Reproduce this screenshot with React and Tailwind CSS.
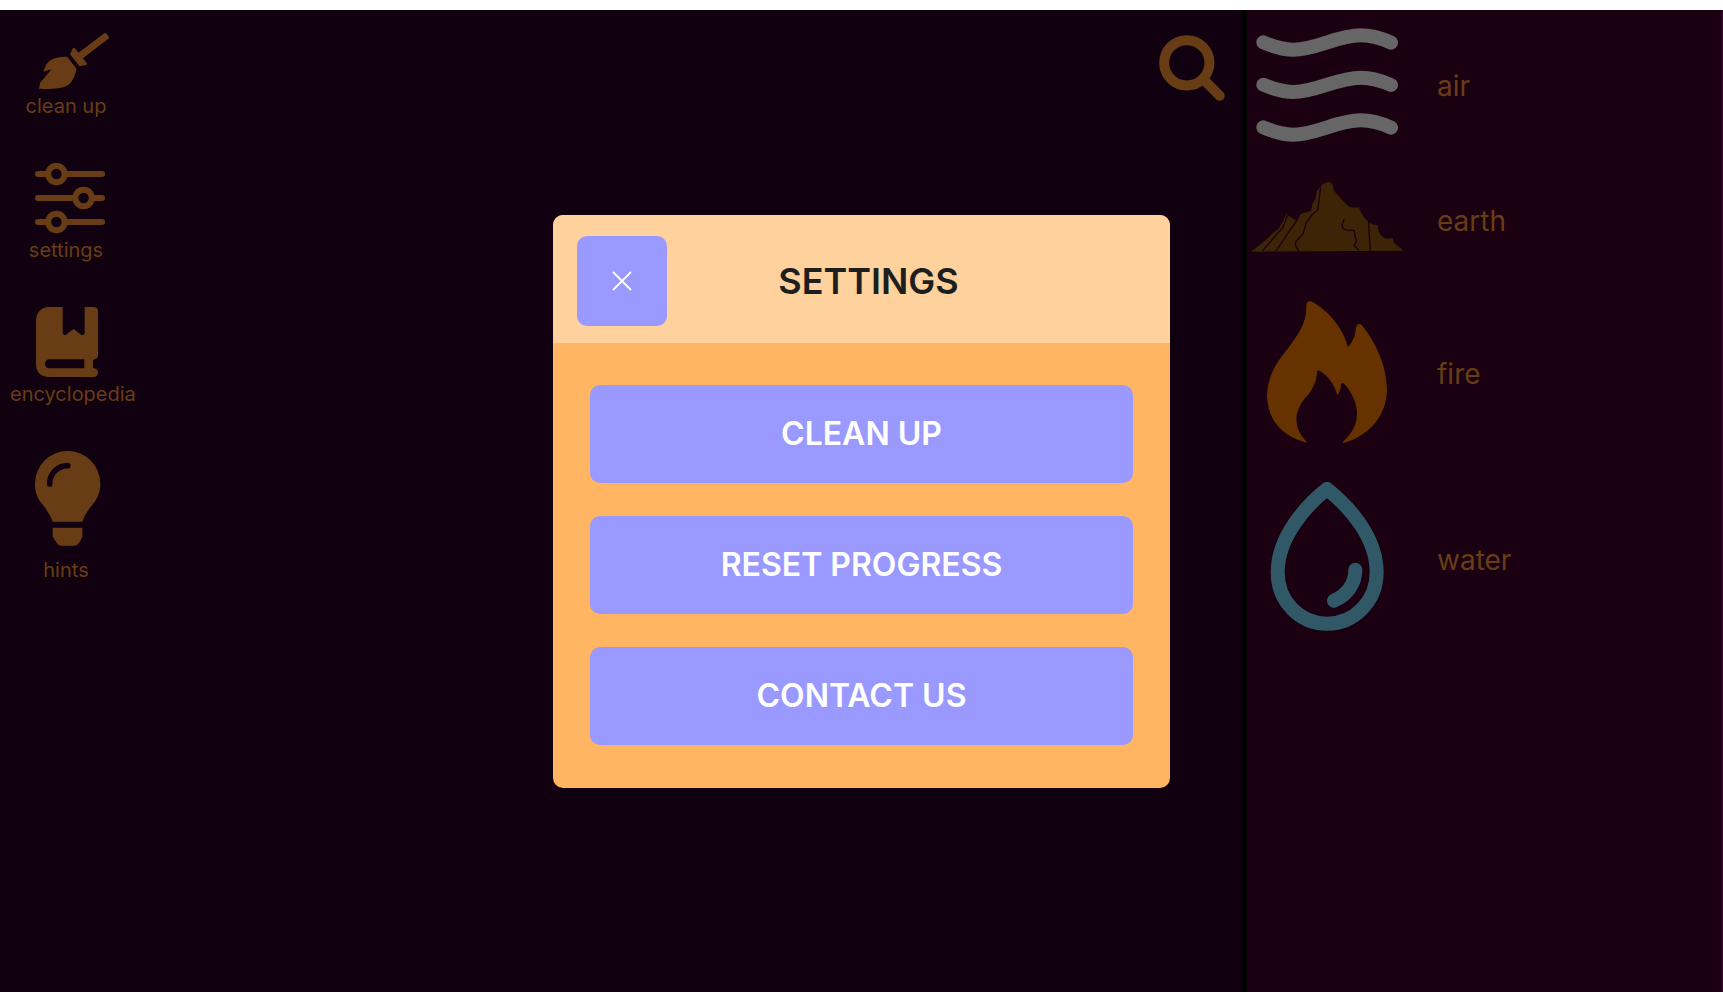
const BROOM =
  "M256.47 216.77l86.73 109.18s-16.6 102.36-76.57 150.12C206.66 523.85 0 510.19 0 510.19s3.8-23.14 11-55.43l94.62-112.17c3.97-4.7-.87-11.62-6.65-9.5l-60.4 22.09c14.44-41.66 32.72-80.04 54.6-97.47 59.97-47.76 163.3-40.94 163.3-40.94zM636.53 31.03l-19.86-25c-5.49-6.9-15.52-8.05-22.41-2.56l-232.48 177.8-34.14-42.97c-5.09-6.41-15.14-5.21-18.59 2.21l-25.33 54.55 86.73 109.18 58.8-12.45c8-1.69 11.42-11.2 6.34-17.6l-34.09-42.92 232.48-177.8c6.89-5.48 8.04-15.53 2.55-22.44z";

function BroomIcon() {
  return (
    <svg aria-hidden="true" className="h-[57px] w-[88px]" viewBox="22 33 88 57" fill="currentColor">
      <path transform="translate(39 33) scale(0.109375)" d={BROOM} />
    </svg>
  );
}

function SlidersIcon() {
  return (
    <svg aria-hidden="true" className="h-[71px] w-[88px]" viewBox="22 163 88 71" fill="none" stroke="currentColor" strokeWidth="6" strokeLinecap="round">
      <path d="M38 174H48M65 174H102M38 198H75M92 198H102M38 222H48M65 222H102" />
      <circle cx="56.4" cy="174" r="8.2" />
      <circle cx="83.6" cy="198" r="8.2" />
      <circle cx="56.4" cy="222" r="8.2" />
    </svg>
  );
}

function BookIcon() {
  return (
    <svg aria-hidden="true" className="h-[71px] w-[88px]" viewBox="66 51 264 213" fill="currentColor" fillRule="evenodd">
      <path d="M148 51H188V128Q190 138 198 134L221 117L243 134Q252 138 254 128V51H282Q294 52 294 64V196Q293 206 284 208L279 210V234Q294 236 294 248Q293 260 281 261H148Q108 259 108 221V91Q110 53 148 51ZM148 208A13.500 13.500 0 0 0 148 235H253V208Z" />
    </svg>
  );
}

function BulbIcon() {
  return (
    <svg aria-hidden="true" className="h-[103px] w-[88px]" viewBox="66 483 264 309">
      <path fill="currentColor" d="M203 483A98 98 0 0 1 301 581C301 610 290 630 275 647Q255 670 247 695H158Q150 672 130 646C115 628 105 612 105 581A98 98 0 0 1 203 483ZM158 713H247V740Q240 756 231 765Q229 767 222 767H184Q178 767 175 764Q163 752 158 738Z" />
      <path className="stroke-[#11000f]" fill="none" strokeWidth="17" strokeLinecap="round" d="M149 582A54 54 0 0 1 203 527" />
    </svg>
  );
}

function SearchIcon() {
  return (
    <svg aria-hidden="true" className="size-[66px]" viewBox="57 104 198 198" fill="none" stroke="currentColor" strokeWidth="30" strokeLinecap="round">
      <circle cx="140.500" cy="187.500" r="68" />
      <path d="M192 239L239 286" />
    </svg>
  );
}

function AirIcon() {
  const wave = "M370 127C400 140 425 149 460 149C530 149 590 106 662 106C697 106 725 115 753 128";
  return (
    <svg aria-hidden="true" className="h-[120px] w-[156px] text-[#666666]" viewBox="327 78 468 360" fill="none" stroke="currentColor" strokeWidth="42" strokeLinecap="round">
      <path d={wave} />
      <path d={wave} transform="translate(0 127)" />
      <path d={wave} transform="translate(0 255)" />
    </svg>
  );
}

function EarthIcon() {
  return (
    <svg aria-hidden="true" className="h-[90px] w-[156px]" viewBox="27 48 468 270">
      <path className="fill-[#3d2406]" d="M33 275L80 238L92 226Q104 213 115 208L126 190L140 160L147 168L165 179L173 178L183 162L213 152L217 133L227 115L230 95L242 78Q254 66 268 66Q276 68 278 75L282 93L300 112Q318 135 328 140Q340 144 356 142L364 158L372 172L386 187L400 194L413 195L415 212Q425 232 437 236L458 235L462 248L490 272Z" />
      <path className="stroke-[#1a0011]" fill="none" strokeWidth="4" strokeLinejoin="round" strokeLinecap="round" d="M143 165L128 204L108 225L68 272M172 179L150 210L109 272M242 78L238 115L233 150L214 166L198 190L190 220L167 246Q163 254 176 272M312 178L306 197Q310 212 325 211Q338 209 343 214L345 230L350 240L343 256L356 270M386 184L388 230L391 272" />
    </svg>
  );
}

function FireIcon() {
  return (
    <svg aria-hidden="true" className="h-[156px] w-[156px]" viewBox="27 18 468 468">
      <path className="fill-[#663300]" d="M199 45Q200 32 213 34C260 58 308 110 324 171C338 157 346 137 348 112Q350 102 358 102Q364 102 368 109C405 155 440 225 441 300C440 370 395 435 311 459Q306 457 312 452C340 425 352 400 351 365C349 335 330 297 309 279Q303 278 303 284C302 298 298 308 292 316C284 285 265 257 236 241Q231 240 231 247C231 275 215 305 195 325C160 368 160 415 200 455Q200 458 195 457C120 435 82 385 81 315C84 255 110 218 140 180C175 133 201 100 199 45Z" />
    </svg>
  );
}

function WaterIcon() {
  return (
    <svg aria-hidden="true" className="h-[156px] w-[156px] text-[#315866]" viewBox="27 36 468 468" fill="none" stroke="currentColor" strokeWidth="42" strokeLinecap="round" strokeLinejoin="round">
      <path d="M261 57C200 105 113 200 113 307C113 395 180 461 261 461C342 461 410 395 410 307C410 200 325 108 261 57Z" />
      <path d="M346 299C346 340 322 375 282 392" />
    </svg>
  );
}

const tools = [
  { label: "clean up", Icon: BroomIcon },
  { label: "settings", Icon: SlidersIcon },
  { label: "encyclopedia", Icon: BookIcon },
  { label: "hints", Icon: BulbIcon },
];

const elements = [
  { label: "air", Icon: AirIcon },
  { label: "earth", Icon: EarthIcon },
  { label: "fire", Icon: FireIcon },
  { label: "water", Icon: WaterIcon },
];

const actions = ["CLEAN UP", "RESET PROGRESS", "CONTACT US"];

function SettingsDialog() {
  return (
    <div className="absolute inset-0 flex items-center justify-center">
      <section role="dialog" aria-modal="true" aria-labelledby="settings-title" className="w-full max-w-[617px] overflow-hidden rounded-[10px] bg-[#ffb561]">
        <header className="grid h-32 grid-cols-[90px_1fr_76px] items-center bg-[#ffd19c] px-6 pt-1">
          <button type="button" aria-label="Close" className="flex size-[90px] items-center justify-center rounded-[10px] bg-[#9999ff] text-white">
            <svg aria-hidden="true" className="size-5" viewBox="0 0 20 20" fill="none" stroke="currentColor" strokeWidth="1.8" strokeLinecap="round">
              <path d="M1.500 1.500L18.500 18.500M18.500 1.500L1.500 18.500" />
            </svg>
          </button>
          <h2 id="settings-title" className="text-center text-4xl font-semibold text-[#1c1f1e]">SETTINGS</h2>
        </header>
        <div className="flex flex-col gap-[33px] px-[37px] pt-[42px] pb-[43px]">
          {actions.map((label) => (
            <button key={label} type="button" className="h-[98px] rounded-[10px] bg-[#9999ff] text-[32px] font-semibold text-white">
              {label}
            </button>
          ))}
        </div>
      </section>
    </div>
  );
}

export default function App() {
  return (
    <div className="flex min-h-screen flex-col bg-white pt-2.5 font-['Inter',sans-serif] font-normal text-[#683d16]">
      <div className="relative flex grow">
        <main className="flex grow items-start justify-between bg-[#11000f]">
          <nav aria-label="Tools" className="flex flex-col gap-[45px] pt-[23px] pl-2.5">
            {tools.map(({ label, Icon }) => (
              <button key={label} type="button" className="flex w-28 flex-col items-center gap-1">
                <Icon />
                <span className="block w-full text-center text-xl leading-6">{label}</span>
              </button>
            ))}
          </nav>
          <button type="button" aria-label="Search" className="mt-[25px] mr-[17px]">
            <SearchIcon />
          </button>
        </main>
        <aside className="w-[481px] shrink-0 border-r border-l-[5px] border-r-[#40083a] border-l-black bg-[#1a0011]">
          <ul className="flex flex-col gap-[30px] pt-4 pl-0.5">
            {elements.map(({ label, Icon }) => (
              <li key={label} className="flex items-center gap-8 text-[28px] leading-8">
                <Icon />
                <span>{label}</span>
              </li>
            ))}
          </ul>
        </aside>
        <SettingsDialog />
      </div>
    </div>
  );
}
